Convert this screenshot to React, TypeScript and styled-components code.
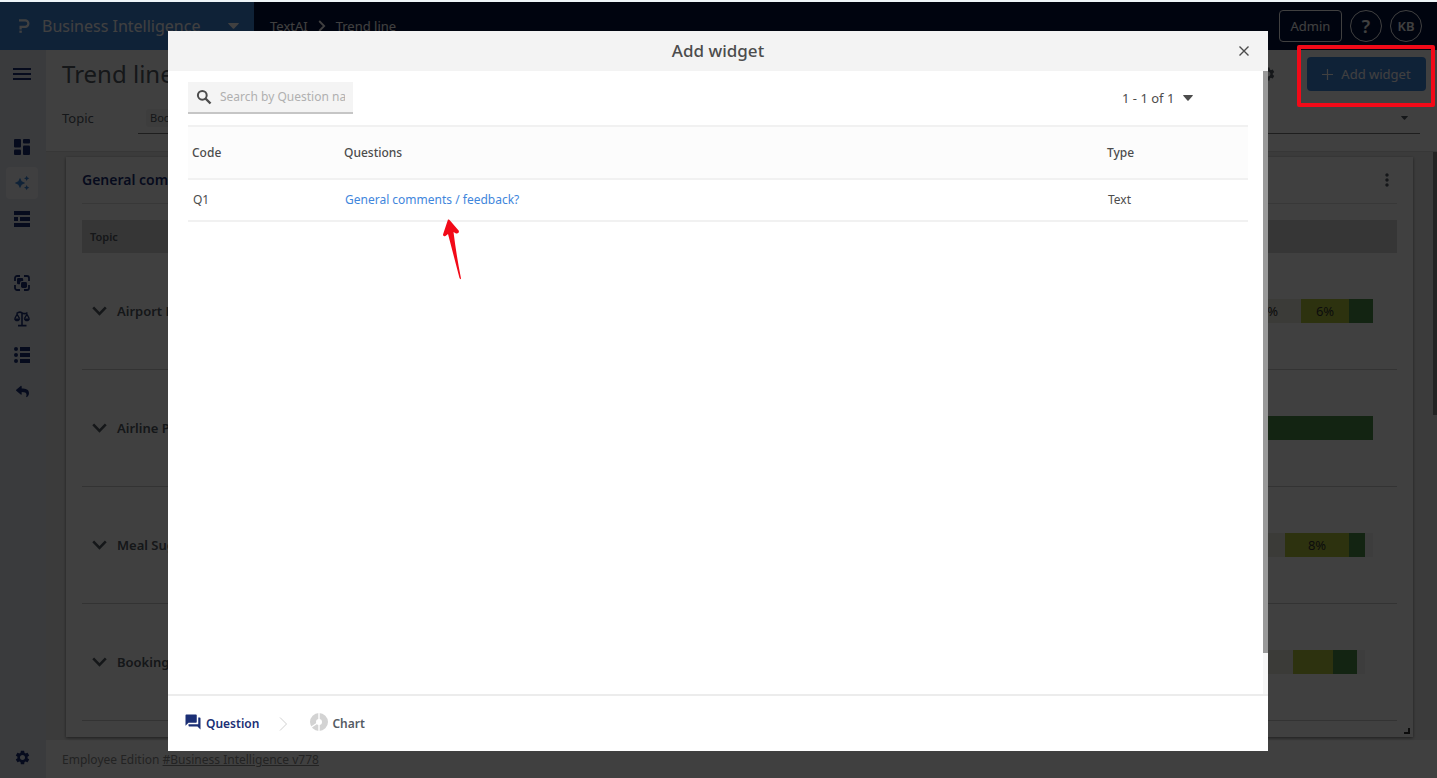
import React from "react";
import styled, { createGlobalStyle } from "styled-components";
import {
  MdAutoAwesome,
  MdForum,
  MdMoreVert,
  MdSettings,
} from "react-icons/md";
import { FaReply } from "react-icons/fa";

const navy = "#1b2f75";
const ink = "#545b64";
const blue = "#3f86dc";

const GlobalStyle = createGlobalStyle`
  *, *::before, *::after { box-sizing: border-box; }
  body {
    margin: 0;
    font-family: "Noto Sans", "Open Sans", sans-serif;
    font-size: 12px;
    line-height: 16px;
    color: ${ink};
    background: #fff;
  }
  button, input, select {
    font: inherit;
    color: inherit;
    background: none;
    border: 0;
    padding: 0;
    margin: 0;
  }
  h1, h2, p { margin: 0; font-weight: 400; }
  svg { display: block; flex: none; }
`;

/* ---------- page frame ---------- */

const Page = styled.div`
  min-height: 100vh;
  display: flex;
  flex-direction: column;
  border-top: 2px solid #eef5f8;
  position: relative;
`;

const TopBar = styled.header`
  height: 48px;
  display: flex;
  align-items: stretch;
  background: #01103c;
  color: #fff;
`;

const Brand = styled.button`
  width: 254px;
  padding: 0 15px 0 18px;
  display: flex;
  align-items: center;
  background: ${blue};
  font-size: 16px;
  line-height: 24px;
`;

const BrandName = styled.span`
  flex: 1;
  margin-left: 12px;
  text-align: left;
`;

const Crumbs = styled.nav`
  flex: 1;
  display: flex;
  align-items: center;
  gap: 10px;
  padding-left: 16px;
  font-size: 13px;

  a {
    color: inherit;
    text-decoration: none;
  }
`;

const TopActions = styled.div`
  display: flex;
  align-items: center;
  gap: 8px;
  padding-right: 15px;
`;

const AdminButton = styled.button`
  width: 63px;
  height: 32px;
  border: 1px solid #fff;
  border-radius: 4px;
  font-size: 13px;
`;

const RoundButton = styled.button<{ $size: number }>`
  width: 32px;
  height: 32px;
  border: 1px solid #fff;
  border-radius: 50%;
  font-size: ${(p) => p.$size}px;
  font-weight: 600;
`;

const Body = styled.div`
  flex: 1;
  display: flex;
`;

/* ---------- side navigation ---------- */

const Side = styled.nav`
  width: 46px;
  padding: 6px 7px 5px 6px;
  display: flex;
  flex-direction: column;
  background: #e6ebf4;
  color: ${navy};
`;

const SideGroup = styled.div`
  display: flex;
  flex-direction: column;
  gap: 4px;
  margin-top: 39px;

  & + & {
    margin-top: 32px;
  }
`;

const SideButton = styled.button<{ $active?: boolean }>`
  width: 32px;
  height: 32px;
  display: grid;
  place-items: center;
  border-radius: 4px;
  color: ${(p) => (p.$active ? blue : navy)};
  background: ${(p) => (p.$active ? "#fafcff" : "transparent")};
`;

const MenuButton = styled(SideButton)`
  height: 36px;
`;

const SettingsButton = styled(SideButton)`
  margin-top: auto;
`;

/* ---------- dashboard ---------- */

const Main = styled.main`
  flex: 1;
  min-width: 0;
  display: flex;
  flex-direction: column;
  background: #ececec;
`;

const PageHead = styled.div`
  background: #fff;
  height: 102px;
  border-bottom: 1px solid #dcdcdc;
`;

const TitleRow = styled.div`
  height: 48px;
  display: flex;
  align-items: center;
  padding: 0 11px 0 16px;
`;

const PageTitle = styled.h1`
  flex: 1;
  font-size: 24px;
  line-height: 32px;
`;

const IconButton = styled.button`
  display: grid;
  place-items: center;
  color: ${ink};
`;

const AddButton = styled.button`
  width: 119px;
  height: 34px;
  margin-left: 31px;
  display: flex;
  align-items: center;
  justify-content: center;
  gap: 8px;
  border-radius: 4px;
  background: ${blue};
  color: #fff;
  font-size: 13px;
`;

const FilterRow = styled.div`
  display: flex;
  align-items: center;
  padding: 4px 17px 0 16px;
`;

const FilterLabel = styled.span`
  width: 76px;
  font-size: 13px;
`;

const FilterBox = styled.button`
  flex: 1;
  height: 32px;
  display: flex;
  align-items: center;
  justify-content: space-between;
  padding: 0 12px 0 8px;
  border-bottom: 1px solid #777;
`;

const Chip = styled.span`
  padding: 1px 4px;
  border-radius: 3px;
  background: #f2f2f2;
  font-size: 11px;
`;

const Workspace = styled.div`
  flex: 1;
  display: flex;
  align-items: flex-start;
  padding-left: 20px;
`;

const PageScroll = styled.div`
  width: 4px;
  height: 263px;
  margin-left: 20px;
  background: #8d8d8d;
`;

const Card = styled.section`
  flex: 1;
  margin: 5px 0 3px;
  padding: 0 16px 16px;
  position: relative;
  background: #fff;
  box-shadow: 0 1px 3px rgba(0, 0, 0, 0.5);
`;

const CardHead = styled.div`
  height: 47px;
  display: flex;
  align-items: center;
  justify-content: space-between;
  border-bottom: 1px solid #ddd;
  margin-bottom: 16px;
`;

const CardTitle = styled.h2`
  font-size: 14px;
  line-height: 20px;
  font-weight: 600;
  color: ${navy};
`;

const TopicTable = styled.table`
  width: 100%;
  border-collapse: separate;
  border-spacing: 0;
  table-layout: fixed;

  th {
    height: 33px;
    padding: 0 8px;
    text-align: left;
    font-weight: 600;
    font-size: 11px;
    background: #d6d6d6;
  }

  th:first-child {
    width: 491px;
  }

  td {
    height: 117px;
    padding: 0;
    border-bottom: 1px solid #ccc;
  }
`;

const TopicButton = styled.button`
  display: flex;
  align-items: center;
  gap: 10px;
  padding-left: 10px;
  font-size: 13px;
  font-weight: 600;
`;

const Bar = styled.div`
  height: 24px;
  display: flex;
  margin-right: 24px;
  font-size: 13px;
  line-height: 24px;
  color: #333;
`;

const Segment = styled.div<{ $share: number; $tone: string }>`
  width: ${(p) => p.$share}%;
  background: ${(p) => p.$tone};
  text-align: center;
  overflow: hidden;
`;

const ResizeCorner = styled.span`
  position: absolute;
  right: 3px;
  bottom: 3px;
  width: 6px;
  height: 6px;
  border: solid #333;
  border-width: 0 2px 2px 0;
`;

const PageFoot = styled.footer`
  height: 38px;
  padding: 12px 16px 0;
  background: #fff;
  color: #8a8a8a;

  a {
    color: inherit;
  }
`;

/* ---------- dialog ---------- */

const Overlay = styled.div`
  position: absolute;
  inset: 0;
  display: flex;
  padding: 29px 169px 27px 168px;
  background: rgba(0, 0, 0, 0.75);
`;

const Dialog = styled.div`
  flex: 1;
  min-width: 0;
  display: flex;
  flex-direction: column;
  background: #fff;
  color: #4c4c4c;
`;

const DialogHead = styled.div`
  height: 40px;
  display: grid;
  grid-template-columns: 48px 1fr 48px;
  align-items: center;
  background: #f3f3f3;

  h2 {
    grid-column: 2;
    text-align: center;
    font-size: 17px;
    line-height: 24px;
    font-weight: 500;
  }

  button {
    justify-self: center;
  }
`;

const DialogBody = styled.div`
  flex: 1;
  display: flex;
`;

const DialogContent = styled.div`
  flex: 1;
  padding: 11px 15px 0 20px;
`;

const DialogTrack = styled.div`
  width: 5px;
  padding-bottom: 41px;
  display: flex;
  background: #f6f6f6;
`;

const DialogThumb = styled.div`
  flex: 1;
  background: #999;
`;

const Tools = styled.div`
  display: flex;
  justify-content: space-between;
  align-items: center;
  padding-right: 55px;
  margin-bottom: 11px;
`;

const SearchBox = styled.label`
  width: 165px;
  height: 32px;
  display: flex;
  align-items: center;
  gap: 8px;
  padding: 0 8px;
  background: #f4f4f4;
  border-bottom: 2px solid #c6c6c6;

  input {
    flex: 1;
    min-width: 0;
    outline: 0;
  }

  input::placeholder {
    color: #b0b0b0;
    opacity: 1;
  }
`;

const Pager = styled.label`
  display: flex;
  align-items: center;
  gap: 8px;
  font-size: 13px;

  select {
    appearance: none;
    outline: 0;
  }
`;

const QuestionTable = styled.table`
  width: 100%;
  border-collapse: separate;
  border-spacing: 0;
  table-layout: fixed;

  th,
  td {
    text-align: left;
    border-bottom: 2px solid #f1f1f1;
  }

  th {
    height: 55px;
    padding: 0 4px;
    font-weight: 500;
    border-top: 2px solid #f1f1f1;
    background: #fcfcfc;
  }

  td {
    height: 42px;
    padding: 0 5px;
  }

  a {
    color: ${blue};
    text-decoration: none;
  }
`;

const CodeCol = styled.col`
  width: 152px;
`;

const TypeCol = styled.col`
  width: 145px;
`;

const Steps = styled.div`
  height: 57px;
  display: flex;
  align-items: center;
  padding-left: 16px;
  border-top: 2px solid #ececec;
`;

const Step = styled.button<{ $active?: boolean }>`
  display: flex;
  align-items: center;
  gap: 4px;
  font-weight: 600;
  color: ${(p) => (p.$active ? navy : ink)};

  svg {
    margin-bottom: 4px;
  }
`;

const StepArrow = styled.svg`
  margin: 0 22px 0 20px;
`;

/* ---------- annotations ---------- */

const Highlight = styled.div`
  position: absolute;
  top: 43px;
  right: 2px;
  width: 138px;
  height: 62px;
  border: 4px solid #f20a18;
  border-radius: 2px;
  pointer-events: none;
`;

const Pointer = styled.svg`
  position: absolute;
  top: 216px;
  left: 441px;
  pointer-events: none;
`;

/* ---------- icons ---------- */

const Caret = ({ w = 10, h = 6 }: { w?: number; h?: number }) => (
  <svg width={w} height={h} viewBox="0 0 10 6" preserveAspectRatio="none" aria-hidden="true">
    <path d="M0.6 0h8.8q.8.2.3.8L5.6 5.5q-.6.6-1.2 0L.3.8Q-.2.2.6 0z" fill="currentColor" />
  </svg>
);

const Logo = () => (
  <svg width="12" height="14" viewBox="0 0 12 14" aria-hidden="true">
    <path d="M1 1.4h6.2a3.1 3.1 0 0 1 0 6.4H2.6v2.6" fill="none" stroke="currentColor" strokeWidth="2.2" />
    <rect x="1.4" y="11.6" width="2.4" height="2.2" fill="currentColor" />
  </svg>
);

const CrumbChevron = () => (
  <svg width="8" height="12" viewBox="0 0 8 12" aria-hidden="true">
    <path d="M1.2 1l5 5-5 5" fill="none" stroke="currentColor" strokeWidth="1.8" />
  </svg>
);

const SearchIcon = () => (
  <svg width="16" height="16" viewBox="0 0 16 16" aria-hidden="true">
    <circle cx="6.3" cy="6.3" r="4.4" fill="none" stroke="currentColor" strokeWidth="2" />
    <path d="M9.500 9.500l5 5" stroke="currentColor" strokeWidth="2.400" />
  </svg>
);

const Hamburger = () => (
  <svg width="18" height="12" viewBox="0 0 18 12" aria-hidden="true">
    <path d="M0 1h18M0 6h18M0 11h18" stroke="currentColor" strokeWidth="2" />
  </svg>
);

const Tiles = () => (
  <svg width="16" height="16" viewBox="0 0 16 16" fill="currentColor" aria-hidden="true">
    <rect width="7" height="8.6" rx="1" />
    <rect x="9" width="7" height="4.4" rx="1" />
    <rect y="10.6" width="7" height="5.4" rx="1" />
    <rect x="9" y="6.4" width="7" height="9.6" rx="1" />
  </svg>
);

const Rows = () => (
  <svg width="16" height="16" viewBox="0 0 16 16" fill="currentColor" aria-hidden="true">
    <path d="M0 0h16v4H0zM0 6h4v4H0zM6 6h10v4H6zM0 12h16v4H0z" />
  </svg>
);

const Focus = () => (
  <svg width="16" height="16" viewBox="0 0 16 16" aria-hidden="true">
    <path
      d="M1 6V3a2 2 0 0 1 2-2h3M10 1h3a2 2 0 0 1 2 2v3M15 10v3a2 2 0 0 1-2 2h-3M6 15H3a2 2 0 0 1-2-2v-3"
      fill="none"
      stroke="currentColor"
      strokeWidth="1.8"
    />
    <path
      d="M4.2 3H8a1.2 1.2 0 0 1 1.2 1.2V6H8a2 2 0 0 0-2 2v1.2H4.2A1.2 1.2 0 0 1 3 8V4.2A1.2 1.2 0 0 1 4.2 3z"
      fill="currentColor"
    />
    <rect x="7" y="7" width="6" height="6" rx="1.4" fill="currentColor" />
  </svg>
);

const Scale = () => (
  <svg width="16" height="16" viewBox="0 0 16 16" aria-hidden="true">
    <path
      d="M2.5 2.6Q5.5 0 8 1.8Q10.5 3.6 13.5 1.6M8 1.8V14M4 14.6h8.500"
      fill="none"
      stroke="currentColor"
      strokeWidth="1.6"
    />
    <path
      d="M3 3.2L.8 7.6M3 3.2l2.6 4.4M13 3.2l-2.6 4.4M13 3.2l2.2 4.4"
      fill="none"
      stroke="currentColor"
      strokeWidth="1.3"
    />
    <path d="M0 7.4h6.2q-.4 2.8-3.1 2.8T0 7.4zM9.8 7.4H16q-.4 2.8-3.1 2.8T9.8 7.4z" fill="currentColor" />
  </svg>
);

const List = () => (
  <svg width="16" height="16" viewBox="0 0 16 16" fill="currentColor" aria-hidden="true">
    <circle cx="2" cy="2" r="2" />
    <circle cx="2" cy="8" r="2" />
    <circle cx="2" cy="14" r="2" />
    <path d="M6 0h10v4H6zM6 6h10v4H6zM6 12h10v4H6z" />
  </svg>
);

const RowChevron = () => (
  <svg width="15" height="10" viewBox="0 0 15 10" aria-hidden="true">
    <path d="M1.2 1.4l6.3 6.4 6.3-6.4" fill="none" stroke="currentColor" strokeWidth="2.6" />
  </svg>
);

const Plus = () => (
  <svg width="11" height="11" viewBox="0 0 11 11" aria-hidden="true">
    <path d="M5.5 0v11M0 5.5h11" stroke="currentColor" strokeWidth="1.2" />
  </svg>
);

const Close = () => (
  <svg width="10" height="10" viewBox="0 0 10 10" aria-hidden="true">
    <path d="M.5.5l9 9M9.5.5l-9 9" stroke="currentColor" strokeWidth="1.4" />
  </svg>
);

const Donut = () => (
  <svg width="18" height="18" viewBox="0 0 18 18" aria-hidden="true">
    <circle cx="9" cy="9" r="6" fill="none" stroke="#d3d3d3" strokeWidth="6" />
    <path d="M9 0v9L1.5 14M9 9v9" fill="none" stroke="#fff" strokeWidth="1.4" />
  </svg>
);

/* ---------- data ---------- */

const tones = {
  red: "#c8453a",
  orange: "#e9a23b",
  light: "#eae9dd",
  lime: "#b2c73c",
  green: "#4e8f4a",
  rest: "#f2f2f2",
  none: "transparent",
};

type Tone = keyof typeof tones;
type Part = { tone: Tone; share: number; label?: string };

const topics: { name: string; parts: Part[] }[] = [
  {
    name: "Airport Lounge",
    parts: [
      { tone: "red", share: 60 },
      { tone: "orange", share: 23 },
      { tone: "light", share: 8, label: "8%" },
      { tone: "lime", share: 6, label: "6%" },
      { tone: "green", share: 3 },
    ],
  },
  { name: "Airline Points", parts: [{ tone: "green", share: 100 }] },
  {
    name: "Meal Suggestions",
    parts: [
      { tone: "red", share: 70 },
      { tone: "light", share: 19 },
      { tone: "lime", share: 8, label: "8%" },
      { tone: "green", share: 2 },
      { tone: "rest", share: 1 },
    ],
  },
  {
    name: "Booking",
    parts: [
      { tone: "red", share: 70 },
      { tone: "light", share: 20 },
      { tone: "lime", share: 5 },
      { tone: "green", share: 3 },
      { tone: "rest", share: 1 },
      { tone: "none", share: 1 },
    ],
  },
];

export default function App() {
  return (
    <Page>
      <GlobalStyle />
      <TopBar>
        <Brand>
          <Logo />
          <BrandName>Business Intelligence</BrandName>
          <Caret w={11} h={6} />
        </Brand>
        <Crumbs aria-label="Breadcrumb">
          <a href="#textai">TextAI</a>
          <CrumbChevron />
          <a href="#trend">Trend line</a>
        </Crumbs>
        <TopActions>
          <AdminButton>Admin</AdminButton>
          <RoundButton $size={18}>?</RoundButton>
          <RoundButton $size={13}>KB</RoundButton>
        </TopActions>
      </TopBar>

      <Body>
        <Side aria-label="Sections">
          <MenuButton aria-label="Menu"><Hamburger /></MenuButton>
          <SideGroup>
            <SideButton aria-label="Dashboards"><Tiles /></SideButton>
            <SideButton aria-label="Text analysis" $active><MdAutoAwesome size={16} /></SideButton>
            <SideButton aria-label="Layouts"><Rows /></SideButton>
          </SideGroup>
          <SideGroup>
            <SideButton aria-label="Segments"><Focus /></SideButton>
            <SideButton aria-label="Weighting"><Scale /></SideButton>
            <SideButton aria-label="List"><List /></SideButton>
            <SideButton aria-label="Back"><FaReply size={13} /></SideButton>
          </SideGroup>
          <SettingsButton aria-label="Settings"><MdSettings size={17} /></SettingsButton>
        </Side>

        <Main>
          <PageHead>
            <TitleRow>
              <PageTitle>Trend line</PageTitle>
              <IconButton aria-label="Dashboard settings"><MdSettings size={16} /></IconButton>
              <AddButton><Plus />Add widget</AddButton>
            </TitleRow>
            <FilterRow>
              <FilterLabel id="topic-label">Topic</FilterLabel>
              <FilterBox aria-labelledby="topic-label" aria-haspopup="listbox">
                <Chip>Booking</Chip>
                <Caret w={7} h={4} />
              </FilterBox>
            </FilterRow>
          </PageHead>

          <Workspace>
            <Card>
              <CardHead>
                <CardTitle>General comments</CardTitle>
                <IconButton aria-label="Widget menu"><MdMoreVert size={20} /></IconButton>
              </CardHead>
              <TopicTable>
                <thead>
                  <tr>
                    <th scope="col">Topic</th>
                    <th scope="col" aria-label="Sentiment" />
                  </tr>
                </thead>
                <tbody>
                  {topics.map((topic) => (
                    <tr key={topic.name}>
                      <td>
                        <TopicButton><RowChevron />{topic.name}</TopicButton>
                      </td>
                      <td>
                        <Bar>
                          {topic.parts.map((part) => (
                            <Segment key={part.tone} $share={part.share} $tone={tones[part.tone]}>
                              {part.label}
                            </Segment>
                          ))}
                        </Bar>
                      </td>
                    </tr>
                  ))}
                </tbody>
              </TopicTable>
              <ResizeCorner />
            </Card>
            <PageScroll />
          </Workspace>

          <PageFoot>
            Employee Edition <a href="#version">#Business Intelligence v778</a>
          </PageFoot>
        </Main>
      </Body>

      <Overlay>
        <Dialog role="dialog" aria-modal="true" aria-labelledby="dialog-title">
          <DialogHead>
            <h2 id="dialog-title">Add widget</h2>
            <button aria-label="Close"><Close /></button>
          </DialogHead>
          <DialogBody>
            <DialogContent>
              <Tools>
                <SearchBox>
                  <SearchIcon />
                  <input type="text" placeholder="Search by Question name" aria-label="Search by Question name" />
                </SearchBox>
                <Pager>
                  <select aria-label="Page">
                    <option>1 - 1 of 1</option>
                  </select>
                  <Caret />
                </Pager>
              </Tools>
              <QuestionTable>
                <colgroup>
                  <CodeCol />
                  <col />
                  <TypeCol />
                </colgroup>
                <thead>
                  <tr>
                    <th scope="col">Code</th>
                    <th scope="col">Questions</th>
                    <th scope="col">Type</th>
                  </tr>
                </thead>
                <tbody>
                  <tr>
                    <td>Q1</td>
                    <td><a href="#q1">General comments / feedback?</a></td>
                    <td>Text</td>
                  </tr>
                </tbody>
              </QuestionTable>
            </DialogContent>
            <DialogTrack><DialogThumb /></DialogTrack>
          </DialogBody>
          <Steps>
            <Step $active><MdForum size={18} />Question</Step>
            <StepArrow width="9" height="14" viewBox="0 0 9 14" aria-hidden="true">
              <path d="M1 .5L7.5 7 1 13.5" fill="none" stroke="#d0d0d0" />
            </StepArrow>
            <Step><Donut />Chart</Step>
          </Steps>
        </Dialog>
      </Overlay>

      <Highlight />
      <Pointer width="21" height="64" viewBox="0 0 21 64" aria-hidden="true">
        <path
          d="M7 1.5Q8 1 9 2.5L18 13Q18 16 15 15.5L12.5 14Q15.5 38 20 60.5Q19.5 62 18.5 60L7 16L4.5 18Q2 19 2 16.5Z"
          fill="#f20a18"
        />
      </Pointer>
    </Page>
  );
}
